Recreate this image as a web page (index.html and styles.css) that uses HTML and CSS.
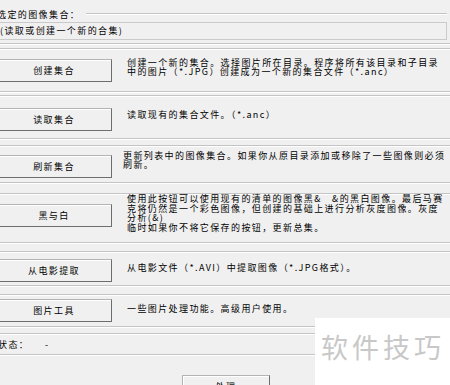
FILE: index.html
```html
<!DOCTYPE html>
<html>
<head>
  <title>图像集合</title>
  <link rel="stylesheet" href="styles.css">
</head>
<body>
  <div class="top">
    <div class="legend"><span>选定的图像集合：</span><i class="rule"></i></div>
    <div class="current">(读取或创建一个新的合集)</div>
  </div>

  <div class="row r1">
    <button class="btn">创建集合</button>
    <p class="desc">创建一个新的集合。选择图片所在目录。程序将所有该目录和子目录<br>中的图片（*.JPG）创建成为一个新的集合文件（*.anc）</p>
  </div>

  <div class="row r2">
    <button class="btn">读取集合</button>
    <p class="desc">读取现有的集合文件。（*.anc）</p>
  </div>

  <div class="row r3">
    <button class="btn">刷新集合</button>
    <p class="desc shift">更新列表中的图像集合。如果你从原目录添加或移除了一些图像则必须<br>刷新。</p>
  </div>

  <div class="row r4">
    <button class="btn">黑与白</button>
    <p class="desc">使用此按钮可以使用现有的清单的图像黑&amp;　&amp;的黑白图像。最后马赛<br>克将仍然是一个彩色图像，但创建的基础上进行分析灰度图像。灰度<br>分析(&amp;)<br>临时如果你不将它保存的按钮，更新总集。</p>
  </div>

  <div class="row r5">
    <button class="btn">从电影提取</button>
    <p class="desc">从电影文件（*.AVI）中提取图像（*.JPG格式）。</p>
  </div>

  <div class="row r6">
    <button class="btn">图片工具</button>
    <p class="desc">一些图片处理功能。高级用户使用。</p>
  </div>

  <div class="status">
    <span class="status-label">状态：</span>
    <span>-</span>
  </div>

  <div class="footer">
    <button class="btn close">处理</button>
  </div>

  <div class="watermark">软件技巧</div>
</body>
</html>
```

FILE: styles.css
```css
body {
  margin: 0;
  width: 450px;
  height: 385px;
  overflow: hidden;
  position: relative;
  background-color: #f0f0f0;
  font-family: "Noto Sans CJK SC", "Noto Sans", sans-serif;
  font-size: 9px;
  letter-spacing: 1.4px;
  color: #000000;
}

/* etched frame lines like a windows group box */
.top,
.row,
.status {
  border-bottom: 1px solid #c4c4c4;
  box-shadow: 0 1px #ffffff;
}

.row,
.status {
  display: flex;
  align-items: center;
  border-top: 1px solid #c4c4c4;
  box-shadow: inset 0 1px #ffffff, 0 1px #ffffff;
}

.top {
  height: 43px;
  padding-right: 3px;
}

.legend {
  display: flex;
  align-items: center;
  height: 14px;
  padding-top: 7px;
  margin-left: -3px;
  line-height: 9px;
}

.rule {
  flex: 1;
  height: 1px;
  margin-left: 6px;
  margin-top: -1px;
  background-color: #c4c4c4;
  box-shadow: 0 1px #ffffff;
}

.current {
  height: 13px;
  margin-top: 1px;
  margin-left: -4px;
  padding: 3px 4px 0 3px;
  border: 1px solid #cacaca;
  line-height: 9px;
}

.btn {
  flex: none;
  width: 116px;
  height: 23px;
  margin-left: -4px;
  padding: 0;
  background-color: #f0f0f0;
  border: 1px solid #b4b4b4;
  border-right-color: #6e6e6e;
  border-bottom-color: #6e6e6e;
  box-shadow: inset 1px 1px #ffffff;
  font-family: inherit;
  font-size: 9px;
  letter-spacing: 1.4px;
  color: #000000;
}

.desc {
  margin: 0 0 6px 15px;
  white-space: nowrap;
  line-height: 9.5px;
}

.desc.shift {
  margin-left: 11px;
}

.r1 { height: 42px; margin-top: 4px; }
.r2 { height: 42px; margin-top: 3px; }
.r2 .btn { margin-top: 4px; }
.r2 .desc { margin-bottom: 4px; }
.r3 { height: 36px; margin-top: 6px; }
.r3 .btn { margin-top: 4px; }
.r3 .desc { margin-bottom: 8px; }
.r4 { height: 48px; margin-top: 10px; }
.r4 .btn { margin-top: -5px; }
.r4 .desc { margin-bottom: 10px; }
.r5 { height: 33px; margin-top: 8px; }
.r5 .btn { margin-top: 3px; }
.r5 .desc { margin-bottom: 2px; }
.r6 { height: 31px; margin-top: 8px; }
.r6 .desc { margin-bottom: 4px; }

.status {
  height: 20px;
  margin-top: 6px;
  margin-left: -2px;
  line-height: 9px;
}

.status-label {
  width: 47px;
}

.footer {
  padding: 20px 0 0 182px;
}

.close {
  width: 88px;
  margin-left: 0;
  text-align: center;
  line-height: 12px;
}

.watermark {
  position: absolute;
  left: 315px;
  top: 318px;
  width: 135px;
  height: 67px;
  background-color: #ffffff;
  padding: 15px 0 0 6px;
  box-sizing: border-box;
  font-size: 27px;
  letter-spacing: 4px;
  line-height: 28px;
  color: #c8c8c8;
}
```
